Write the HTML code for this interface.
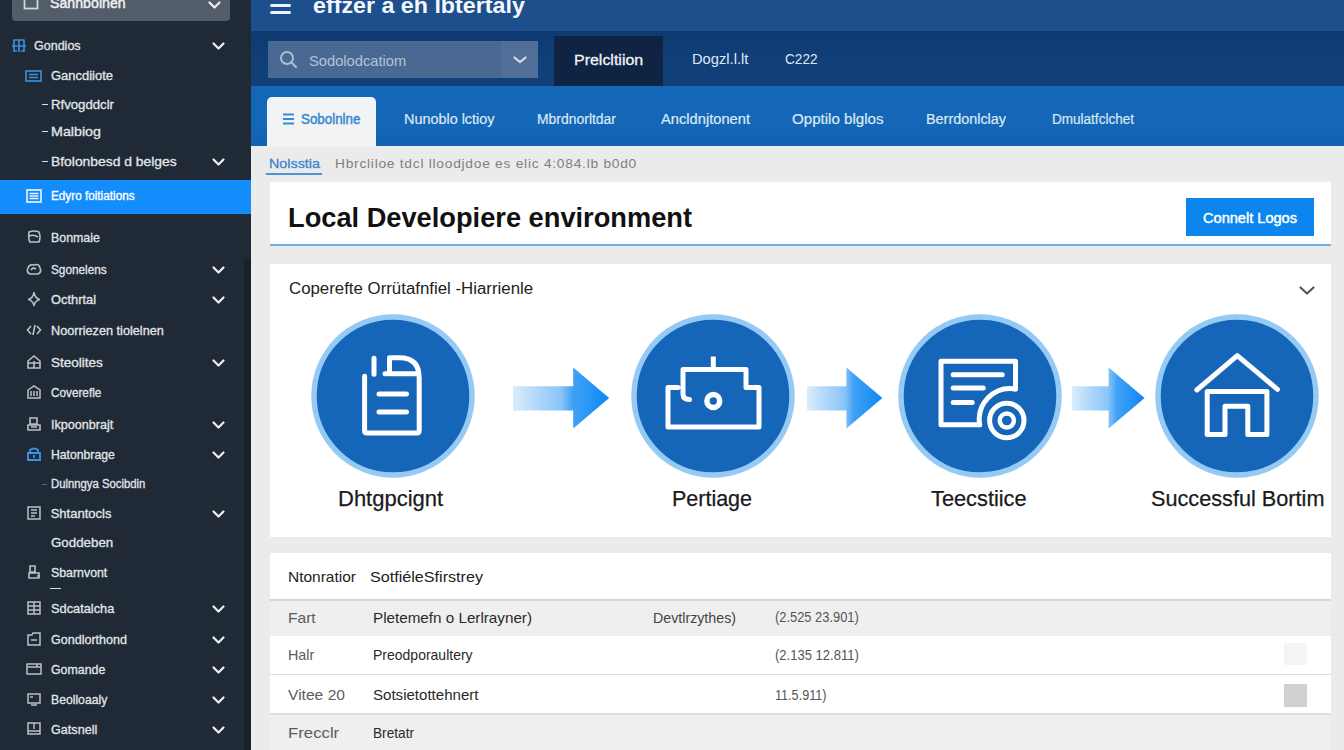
<!DOCTYPE html><html><head><meta charset="utf-8"><style>
*{margin:0;padding:0;box-sizing:border-box}
html,body{width:1344px;height:750px;overflow:hidden;background:#ebebeb;font-family:"Liberation Sans",sans-serif}
.a{position:absolute;white-space:nowrap}
.x{position:absolute;white-space:nowrap;line-height:1;transform-origin:0 0}
svg.a{overflow:visible}
#w{position:absolute;left:0;top:0;width:1344px;height:750px;overflow:hidden}
</style></head><body><div id="w">
<div class="a" style="left:0px;top:0px;width:251px;height:750px;background:#202a36"></div>
<div class="a" style="left:244px;top:258px;width:7px;height:492px;background:#19212c"></div>
<div class="a" style="left:12px;top:-8px;width:218px;height:29px;background:#535c69;border-radius:0 0 4px 4px"></div>
<svg class="a" style="left:23px;top:-3px" width="17" height="14" viewBox="0 0 17 14"><rect x="1.5" y="-3" width="13" height="14.5" fill="none" stroke="#cfd5dc" stroke-width="1.8"/></svg>
<svg class="a" style="left:208px;top:1.0px" width="13" height="9" viewBox="0 0 13 9"><path d="M1.5 1.5 L6.5 6.5 L11.5 1.5" fill="none" stroke="#eef1f4" stroke-width="2.2" stroke-linecap="round" stroke-linejoin="round"/></svg>
<svg class="a" style="left:11px;top:38px" width="16" height="15" viewBox="0 0 16 15"><path d="M3 2H13V8H3ZM1 8H15M8 2V14M3 8V13H6M13 8V13H10" fill="none" stroke="#3b8fe0" stroke-width="1.7" stroke-linejoin="round"/></svg>
<svg class="a" style="left:212px;top:42.0px" width="13" height="9" viewBox="0 0 13 9"><path d="M1.5 1.5 L6.5 6.5 L11.5 1.5" fill="none" stroke="#eef1f4" stroke-width="2.2" stroke-linecap="round" stroke-linejoin="round"/></svg>
<svg class="a" style="left:25px;top:70px" width="17" height="12" viewBox="0 0 17 12"><rect x="1" y="1" width="15" height="10" fill="none" stroke="#3b8fe0" stroke-width="1.6"/><path d="M4 4.5H13M4 7.5H13" stroke="#3b8fe0" stroke-width="1.5"/></svg>
<div class="a" style="left:42px;top:104px;width:6px;height:1.3px;background:#d9dee4"></div>
<div class="a" style="left:42px;top:131px;width:6px;height:1.3px;background:#d9dee4"></div>
<div class="a" style="left:42px;top:161px;width:6px;height:1.3px;background:#d9dee4"></div>
<svg class="a" style="left:212px;top:157.5px" width="13" height="9" viewBox="0 0 13 9"><path d="M1.5 1.5 L6.5 6.5 L11.5 1.5" fill="none" stroke="#eef1f4" stroke-width="2.2" stroke-linecap="round" stroke-linejoin="round"/></svg>
<div class="a" style="left:0px;top:180px;width:251px;height:34px;background:#138cfc"></div>
<svg class="a" style="left:26px;top:189px" width="16" height="14" viewBox="0 0 16 14"><rect x="1" y="1" width="14" height="12" fill="none" stroke="#e8f3ff" stroke-width="1.7"/><path d="M3.5 4.5H12.5M3.5 7H12.5M3.5 9.5H12.5" stroke="#e8f3ff" stroke-width="1.4"/></svg>
<svg class="a" style="left:26px;top:229px" width="16" height="16" viewBox="0 0 16 16"><path d="M3 3Q8 1 13 3Q15 8 13 13H4Q2 10 3 3ZM3 7Q8 5 12 8" fill="none" stroke="#b9c0c8" stroke-width="1.6"/></svg>
<svg class="a" style="left:26px;top:261px" width="16" height="16" viewBox="0 0 16 16"><path d="M4 13Q0 11 2 7Q3 3 8 4Q13 2 14 7Q16 11 12 13Z M5 9Q7 6 10 8" fill="none" stroke="#b9c0c8" stroke-width="1.6"/></svg>
<svg class="a" style="left:212px;top:265.5px" width="13" height="9" viewBox="0 0 13 9"><path d="M1.5 1.5 L6.5 6.5 L11.5 1.5" fill="none" stroke="#eef1f4" stroke-width="2.2" stroke-linecap="round" stroke-linejoin="round"/></svg>
<svg class="a" style="left:26px;top:291px" width="16" height="16" viewBox="0 0 16 16"><path d="M8 1.5Q9 7 13.5 8.5Q9 10 8 14.5Q7 10 2.5 8.5Q7 7 8 1.5Z" fill="none" stroke="#b9c0c8" stroke-width="1.5" stroke-linejoin="round"/></svg>
<svg class="a" style="left:212px;top:295.5px" width="13" height="9" viewBox="0 0 13 9"><path d="M1.5 1.5 L6.5 6.5 L11.5 1.5" fill="none" stroke="#eef1f4" stroke-width="2.2" stroke-linecap="round" stroke-linejoin="round"/></svg>
<svg class="a" style="left:26px;top:322px" width="16" height="16" viewBox="0 0 16 16"><path d="M5 4L1.5 8L5 12M11 4L14.5 8L11 12M9 3L7 13" fill="none" stroke="#b9c0c8" stroke-width="1.6"/></svg>
<svg class="a" style="left:26px;top:354px" width="16" height="16" viewBox="0 0 16 16"><path d="M2 7L8 2L14 7V14H2ZM2 9H14M8 7V14" fill="none" stroke="#b9c0c8" stroke-width="1.6"/></svg>
<svg class="a" style="left:212px;top:358.5px" width="13" height="9" viewBox="0 0 13 9"><path d="M1.5 1.5 L6.5 6.5 L11.5 1.5" fill="none" stroke="#eef1f4" stroke-width="2.2" stroke-linecap="round" stroke-linejoin="round"/></svg>
<svg class="a" style="left:26px;top:384px" width="16" height="16" viewBox="0 0 16 16"><path d="M2 6L8 2L14 6V14H2ZM5 7V12M8 7V12M11 7V12" fill="none" stroke="#b9c0c8" stroke-width="1.5"/></svg>
<svg class="a" style="left:26px;top:416px" width="16" height="16" viewBox="0 0 16 16"><path d="M4 2H11V8H4ZM2 14V9H14V14ZM5 11H11" fill="none" stroke="#b9c0c8" stroke-width="1.6"/></svg>
<svg class="a" style="left:212px;top:420.5px" width="13" height="9" viewBox="0 0 13 9"><path d="M1.5 1.5 L6.5 6.5 L11.5 1.5" fill="none" stroke="#eef1f4" stroke-width="2.2" stroke-linecap="round" stroke-linejoin="round"/></svg>
<svg class="a" style="left:26px;top:446px" width="16" height="16" viewBox="0 0 16 16"><path d="M4 7V4Q8 1 12 4V7M2 7H14V14H2ZM8 9V12" fill="none" stroke="#3b93e4" stroke-width="1.8"/></svg>
<svg class="a" style="left:212px;top:450.5px" width="13" height="9" viewBox="0 0 13 9"><path d="M1.5 1.5 L6.5 6.5 L11.5 1.5" fill="none" stroke="#eef1f4" stroke-width="2.2" stroke-linecap="round" stroke-linejoin="round"/></svg>
<svg class="a" style="left:26px;top:505px" width="16" height="16" viewBox="0 0 16 16"><path d="M2 2H14V14H2ZM5 5H11M5 8H11M5 11H9" fill="none" stroke="#b9c0c8" stroke-width="1.5"/></svg>
<svg class="a" style="left:212px;top:509.5px" width="13" height="9" viewBox="0 0 13 9"><path d="M1.5 1.5 L6.5 6.5 L11.5 1.5" fill="none" stroke="#eef1f4" stroke-width="2.2" stroke-linecap="round" stroke-linejoin="round"/></svg>
<svg class="a" style="left:26px;top:564px" width="16" height="16" viewBox="0 0 16 16"><path d="M4 2H9V8H4ZM3 14V9H13V14ZM11 12H14" fill="none" stroke="#b9c0c8" stroke-width="1.6"/></svg>
<div class="a" style="left:50px;top:587.5px;width:11px;height:1.5px;background:#d9dee4"></div>
<div class="a" style="left:42px;top:483.5px;width:5px;height:1.2px;background:#5d6670"></div>
<svg class="a" style="left:26px;top:600px" width="16" height="16" viewBox="0 0 16 16"><path d="M2 2H14V14H2ZM2 6H14M2 10H14M8 2V14" fill="none" stroke="#b9c0c8" stroke-width="1.5"/></svg>
<svg class="a" style="left:212px;top:604.5px" width="13" height="9" viewBox="0 0 13 9"><path d="M1.5 1.5 L6.5 6.5 L11.5 1.5" fill="none" stroke="#eef1f4" stroke-width="2.2" stroke-linecap="round" stroke-linejoin="round"/></svg>
<svg class="a" style="left:26px;top:631px" width="16" height="16" viewBox="0 0 16 16"><path d="M2 4H6L7 2H14V14H2ZM5 9H11" fill="none" stroke="#b9c0c8" stroke-width="1.5"/></svg>
<svg class="a" style="left:212px;top:635.5px" width="13" height="9" viewBox="0 0 13 9"><path d="M1.5 1.5 L6.5 6.5 L11.5 1.5" fill="none" stroke="#eef1f4" stroke-width="2.2" stroke-linecap="round" stroke-linejoin="round"/></svg>
<svg class="a" style="left:26px;top:661px" width="16" height="16" viewBox="0 0 16 16"><path d="M1 3H15V13H1ZM1 6H15M11 3V6" fill="none" stroke="#b9c0c8" stroke-width="1.5"/></svg>
<svg class="a" style="left:212px;top:665.5px" width="13" height="9" viewBox="0 0 13 9"><path d="M1.5 1.5 L6.5 6.5 L11.5 1.5" fill="none" stroke="#eef1f4" stroke-width="2.2" stroke-linecap="round" stroke-linejoin="round"/></svg>
<svg class="a" style="left:26px;top:691px" width="16" height="16" viewBox="0 0 16 16"><path d="M2 3H14V12H2ZM5 14H11M4 6H7" fill="none" stroke="#b9c0c8" stroke-width="1.5"/></svg>
<svg class="a" style="left:212px;top:695.5px" width="13" height="9" viewBox="0 0 13 9"><path d="M1.5 1.5 L6.5 6.5 L11.5 1.5" fill="none" stroke="#eef1f4" stroke-width="2.2" stroke-linecap="round" stroke-linejoin="round"/></svg>
<svg class="a" style="left:26px;top:721px" width="16" height="16" viewBox="0 0 16 16"><path d="M2 2H14V13H2ZM8 2V8M2 10H14" fill="none" stroke="#b9c0c8" stroke-width="1.5"/></svg>
<svg class="a" style="left:212px;top:725.5px" width="13" height="9" viewBox="0 0 13 9"><path d="M1.5 1.5 L6.5 6.5 L11.5 1.5" fill="none" stroke="#eef1f4" stroke-width="2.2" stroke-linecap="round" stroke-linejoin="round"/></svg>
<div class="a" style="left:251px;top:0px;width:1093px;height:31px;background:#1d4f8d"></div>
<div class="a" style="left:270px;top:4px;width:21px;height:3px;background:#e9f2fb;border-radius:1.5px"></div>
<div class="a" style="left:270px;top:11px;width:21px;height:3px;background:#e9f2fb;border-radius:1.5px"></div>
<div class="a" style="left:251px;top:31px;width:1093px;height:55px;background:linear-gradient(#0e3a71,#113f78 60%,#113f78)"></div>
<div class="a" style="left:268px;top:41px;width:233px;height:37px;background:#4a6992"></div>
<div class="a" style="left:501px;top:41px;width:37px;height:37px;background:#506e97"></div>
<svg class="a" style="left:278px;top:50px" width="22" height="20" viewBox="0 0 22 20"><circle cx="9" cy="8" r="6" fill="none" stroke="#aabdd3" stroke-width="2"/><path d="M13.5 12.5L18 17" stroke="#aabdd3" stroke-width="2.2" stroke-linecap="round"/></svg>
<svg class="a" style="left:513px;top:56px" width="14" height="8" viewBox="0 0 14 8"><path d="M1.5 1.5L7 6L12.5 1.5" fill="none" stroke="#d3deea" stroke-width="2.2" stroke-linecap="round"/></svg>
<div class="a" style="left:554px;top:36px;width:109px;height:50px;background:#0f2342"></div>
<div class="a" style="left:251px;top:86px;width:1093px;height:60px;background:linear-gradient(#1467b8,#1466b7 70%,#1262b1)"></div>
<div class="a" style="left:267px;top:96.5px;width:109px;height:50px;background:#f1f3f5;border-radius:5px 5px 0 0"></div>
<svg class="a" style="left:282px;top:113px" width="13" height="12" viewBox="0 0 13 12"><path d="M1 1.5H12M1 6H12M1 10.5H12" stroke="#3a8ad6" stroke-width="2"/></svg>
<div class="a" style="left:266px;top:173px;width:56px;height:2px;background:#4a96dc"></div>
<div class="a" style="left:270px;top:182px;width:1061px;height:64px;background:#fff;border-bottom:2px solid #6eb0e6"></div>
<div class="a" style="left:1186px;top:198px;width:128px;height:38px;background:#0a86ee"></div>
<div class="a" style="left:270px;top:264px;width:1061px;height:272.5px;background:#fff"></div>
<svg class="a" style="left:1299px;top:285.5px" width="16" height="10" viewBox="0 0 16 10"><path d="M1.5 1.5L8 7.5L14.5 1.5" fill="none" stroke="#555" stroke-width="2.2" stroke-linecap="round" stroke-linejoin="round"/></svg>
<svg class="a" style="left:309.5px;top:313.3px" width="166" height="166" viewBox="0 0 166 166"><circle cx="83" cy="83" r="79" fill="#1565b8" stroke="#95caf4" stroke-width="5.5"/><g fill="none" stroke="#fff" stroke-width="5" stroke-linecap="round" stroke-linejoin="round" transform="translate(-309.5 -313.3)"><path d="M373.5 358.5V374.5M389 373V358H399Q418.7 358 418.7 378V431Q418.7 433.3 416.4 433.3H366.4Q364.1 433.3 364.1 431V376.5M384.5 374H416M378.5 394.3H406M378.5 412.3H406"/></g></svg>
<svg class="a" style="left:630px;top:313px" width="166" height="166" viewBox="0 0 166 166"><circle cx="83" cy="83" r="79" fill="#1565b8" stroke="#95caf4" stroke-width="5.5"/><g fill="none" stroke="#fff" stroke-width="5" stroke-linecap="round" stroke-linejoin="round" transform="translate(-630 -313)"><path d="M713.3 356.5V369" stroke-linecap="butt"/><path d="M683 369.5H746V387.5H759V427H668V387.5H678M683 369.5V394Q683 399.5 689.5 399.5"/><circle cx="713.3" cy="401" r="6.4" stroke-width="5.5"/></g></svg>
<svg class="a" style="left:897.3px;top:313px" width="166" height="166" viewBox="0 0 166 166"><circle cx="83" cy="83" r="79" fill="#1565b8" stroke="#95caf4" stroke-width="5.5"/><g fill="none" stroke="#fff" stroke-width="5" stroke-linecap="round" stroke-linejoin="round" transform="translate(-897.3 -313)"><path d="M1015.8 389V361.3H941.3V424.7H980"/><path d="M1015.8 389A31 31 0 0 0 980 424.7"/><path d="M953.5 374.8H1002.5M953.5 388H983.5M953.5 402.5H972.5"/><circle cx="1007.1" cy="420.5" r="17.2"/><circle cx="1007.1" cy="420.5" r="7.1" stroke-width="4.5"/></g></svg>
<svg class="a" style="left:1154.2px;top:313px" width="166" height="166" viewBox="0 0 166 166"><circle cx="83" cy="83" r="79" fill="#1565b8" stroke="#95caf4" stroke-width="5.5"/><g fill="none" stroke="#fff" stroke-width="5" stroke-linecap="round" stroke-linejoin="round" transform="translate(-1154.2 -313)"><path d="M1197 390L1237.5 355.6L1277.7 389.4M1207.4 391.4H1267.1V434.5H1248V406.2H1225.2V434.5H1207.4Z"/></g></svg>
<svg class="a" style="left:513.4px;top:367px" width="96.20000000000005" height="62" viewBox="0 0 96.20000000000005 62"><defs><linearGradient id="g513.4" gradientUnits="userSpaceOnUse" x1="0" x2="96.20000000000005" y1="0" y2="0"><stop offset="0" stop-color="#1a8cf0" stop-opacity="0.16"/><stop offset="0.5" stop-color="#2a95f2" stop-opacity="0.55"/><stop offset="0.62" stop-color="#1e90f4" stop-opacity="0.85"/><stop offset="1" stop-color="#0c88f4"/></linearGradient></defs><path d="M0 19.2H60.200000000000045 V0.5 L96.20000000000005 31 L60.200000000000045 61.5 V43.5 H0Z" fill="url(#g513.4)"/></svg>
<svg class="a" style="left:807px;top:367px" width="75.39999999999998" height="62" viewBox="0 0 75.39999999999998 62"><defs><linearGradient id="g807" gradientUnits="userSpaceOnUse" x1="0" x2="75.39999999999998" y1="0" y2="0"><stop offset="0" stop-color="#1a8cf0" stop-opacity="0.16"/><stop offset="0.5" stop-color="#2a95f2" stop-opacity="0.55"/><stop offset="0.62" stop-color="#1e90f4" stop-opacity="0.85"/><stop offset="1" stop-color="#0c88f4"/></linearGradient></defs><path d="M0 19.2H39.39999999999998 V0.5 L75.39999999999998 31 L39.39999999999998 61.5 V43.5 H0Z" fill="url(#g807)"/></svg>
<svg class="a" style="left:1072px;top:367px" width="72.59999999999991" height="62" viewBox="0 0 72.59999999999991 62"><defs><linearGradient id="g1072" gradientUnits="userSpaceOnUse" x1="0" x2="72.59999999999991" y1="0" y2="0"><stop offset="0" stop-color="#1a8cf0" stop-opacity="0.16"/><stop offset="0.5" stop-color="#2a95f2" stop-opacity="0.55"/><stop offset="0.62" stop-color="#1e90f4" stop-opacity="0.85"/><stop offset="1" stop-color="#0c88f4"/></linearGradient></defs><path d="M0 19.2H36.59999999999991 V0.5 L72.59999999999991 31 L36.59999999999991 61.5 V43.5 H0Z" fill="url(#g1072)"/></svg>
<div class="a" style="left:270px;top:553px;width:1061px;height:197px;background:#fff"></div>
<div class="a" style="left:270px;top:599px;width:1061px;height:1.5px;background:#d6d6d6"></div>
<div class="a" style="left:270px;top:600.5px;width:1061px;height:35.5px;background:#efefef"></div>
<div class="a" style="left:270px;top:674px;width:1061px;height:1.2px;background:#dddddd"></div>
<div class="a" style="left:270px;top:713px;width:1061px;height:1.5px;background:#dddddd"></div>
<div class="a" style="left:270px;top:714.5px;width:1061px;height:36px;background:#efefef"></div>
<div class="a" style="left:1284px;top:643px;width:23px;height:22px;background:#f4f4f4"></div>
<div class="a" style="left:1284px;top:683.5px;width:23px;height:23px;background:#d0d0d0"></div>
<div class="x" id="t0" style="left:50px;top:-3.6px;font-size:14px;font-weight:400;color:#eef1f4;transform:scaleX(1.0127);-webkit-text-stroke:0.45px #eef1f4;">Sannbolnen</div>
<div class="x" id="t1" style="left:34.4px;top:39.0px;font-size:13px;font-weight:400;color:#e2e6ea;transform:scaleX(0.9624);-webkit-text-stroke:0.3px #e2e6ea;">Gondios</div>
<div class="x" id="t2" style="left:51px;top:70.0px;font-size:12px;font-weight:400;color:#e2e6ea;transform:scaleX(1.0806);-webkit-text-stroke:0.3px #e2e6ea;">Gancdiiote</div>
<div class="x" id="t3" style="left:51px;top:97.5px;font-size:13px;font-weight:400;color:#e2e6ea;transform:scaleX(1.0138);-webkit-text-stroke:0.3px #e2e6ea;">Rfvogddclr</div>
<div class="x" id="t4" style="left:51px;top:124.5px;font-size:13px;font-weight:400;color:#e2e6ea;transform:scaleX(1.0981);-webkit-text-stroke:0.3px #e2e6ea;">Malbiog</div>
<div class="x" id="t5" style="left:51px;top:154.5px;font-size:13px;font-weight:400;color:#e2e6ea;transform:scaleX(1.0661);-webkit-text-stroke:0.3px #e2e6ea;">Bfolonbesd d belges</div>
<div class="x" id="t6" style="left:50.7px;top:190.0px;font-size:12px;font-weight:400;color:#ffffff;transform:scaleX(0.9790);-webkit-text-stroke:0.35px #fff;">Edyro foitiations</div>
<div class="x" id="t7" style="left:50.7px;top:230.5px;font-size:13px;font-weight:400;color:#e2e6ea;transform:scaleX(0.9530);-webkit-text-stroke:0.3px #e2e6ea;">Bonmaie</div>
<div class="x" id="t8" style="left:50.7px;top:262.5px;font-size:13px;font-weight:400;color:#e2e6ea;transform:scaleX(0.9064);-webkit-text-stroke:0.3px #e2e6ea;">Sgonelens</div>
<div class="x" id="t9" style="left:50.7px;top:292.5px;font-size:13px;font-weight:400;color:#e2e6ea;transform:scaleX(0.9909);-webkit-text-stroke:0.3px #e2e6ea;">Octhrtal</div>
<div class="x" id="t10" style="left:50.7px;top:323.5px;font-size:13px;font-weight:400;color:#e2e6ea;transform:scaleX(0.9756);-webkit-text-stroke:0.3px #e2e6ea;">Noorriezen tiolelnen</div>
<div class="x" id="t11" style="left:50.7px;top:355.5px;font-size:13px;font-weight:400;color:#e2e6ea;transform:scaleX(1.0406);-webkit-text-stroke:0.3px #e2e6ea;">Steolites</div>
<div class="x" id="t12" style="left:50.7px;top:385.5px;font-size:13px;font-weight:400;color:#e2e6ea;transform:scaleX(0.9040);-webkit-text-stroke:0.3px #e2e6ea;">Coverefle</div>
<div class="x" id="t13" style="left:50.7px;top:417.5px;font-size:13px;font-weight:400;color:#e2e6ea;transform:scaleX(0.9685);-webkit-text-stroke:0.3px #e2e6ea;">Ikpoonbrajt</div>
<div class="x" id="t14" style="left:50.7px;top:447.5px;font-size:13px;font-weight:400;color:#e2e6ea;transform:scaleX(0.9389);-webkit-text-stroke:0.3px #e2e6ea;">Hatonbrage</div>
<div class="x" id="t15" style="left:50.7px;top:477.5px;font-size:12px;font-weight:400;color:#e2e6ea;transform:scaleX(0.9423);-webkit-text-stroke:0.3px #e2e6ea;">Dulnngya Socibdin</div>
<div class="x" id="t16" style="left:50.7px;top:506.5px;font-size:13px;font-weight:400;color:#e2e6ea;-webkit-text-stroke:0.3px #e2e6ea;">Shtantocls</div>
<div class="x" id="t17" style="left:50.7px;top:535.5px;font-size:13px;font-weight:400;color:#e2e6ea;transform:scaleX(1.0258);-webkit-text-stroke:0.3px #e2e6ea;">Goddeben</div>
<div class="x" id="t18" style="left:50.7px;top:565.5px;font-size:13px;font-weight:400;color:#e2e6ea;transform:scaleX(0.9500);-webkit-text-stroke:0.3px #e2e6ea;">Sbarnvont</div>
<div class="x" id="t19" style="left:50.7px;top:601.5px;font-size:13px;font-weight:400;color:#e2e6ea;transform:scaleX(0.9840);-webkit-text-stroke:0.3px #e2e6ea;">Sdcatalcha</div>
<div class="x" id="t20" style="left:50.7px;top:632.5px;font-size:13px;font-weight:400;color:#e2e6ea;transform:scaleX(0.9647);-webkit-text-stroke:0.3px #e2e6ea;">Gondlorthond</div>
<div class="x" id="t21" style="left:50.7px;top:662.5px;font-size:13px;font-weight:400;color:#e2e6ea;transform:scaleX(0.9511);-webkit-text-stroke:0.3px #e2e6ea;">Gomande</div>
<div class="x" id="t22" style="left:50.7px;top:692.5px;font-size:13px;font-weight:400;color:#e2e6ea;transform:scaleX(0.9383);-webkit-text-stroke:0.3px #e2e6ea;">Beolloaaly</div>
<div class="x" id="t23" style="left:50.7px;top:722.5px;font-size:13px;font-weight:400;color:#e2e6ea;transform:scaleX(0.9706);-webkit-text-stroke:0.3px #e2e6ea;">Gatsnell</div>
<div class="x" id="t24" style="left:312.7px;top:-4.7px;font-size:22px;font-weight:700;color:#f4f8fc;transform:scaleX(1.0563);">effzer a eh lbtertaly</div>
<div class="x" id="t25" style="left:308.8px;top:52.5px;font-size:15px;font-weight:400;color:#b3c3d7;transform:scaleX(0.9795);">Sodolodcatiom</div>
<div class="x" id="t26" style="left:573.8px;top:51.5px;font-size:15px;font-weight:400;color:#f2f5f9;transform:scaleX(1.0641);-webkit-text-stroke:0.3px #f2f5f9;">Prelcltiion</div>
<div class="x" id="t27" style="left:691.6px;top:52.0px;font-size:14px;font-weight:400;color:#dfe8f2;transform:scaleX(1.0505);">Dogzl.l.lt</div>
<div class="x" id="t28" style="left:785px;top:52.0px;font-size:14px;font-weight:400;color:#dfe8f2;transform:scaleX(0.9711);">C222</div>
<div class="x" id="t29" style="left:300.8px;top:112.0px;font-size:14px;font-weight:400;color:#3987cf;transform:scaleX(0.9537);-webkit-text-stroke:0.45px #3987cf;">Sobolnlne</div>
<div class="x" id="t30" style="left:404px;top:112.0px;font-size:14px;font-weight:400;color:#dce8f5;transform:scaleX(1.0291);-webkit-text-stroke:0.2px #dce8f5;">Nunoblo lctioy</div>
<div class="x" id="t31" style="left:537px;top:112.0px;font-size:14px;font-weight:400;color:#dce8f5;transform:scaleX(0.9953);-webkit-text-stroke:0.2px #dce8f5;">Mbrdnorltdar</div>
<div class="x" id="t32" style="left:661px;top:112.0px;font-size:14px;font-weight:400;color:#dce8f5;transform:scaleX(1.0490);-webkit-text-stroke:0.2px #dce8f5;">Ancldnjtonent</div>
<div class="x" id="t33" style="left:792px;top:112.0px;font-size:14px;font-weight:400;color:#dce8f5;transform:scaleX(1.0787);-webkit-text-stroke:0.2px #dce8f5;">Opptilo blglos</div>
<div class="x" id="t34" style="left:926px;top:112.0px;font-size:14px;font-weight:400;color:#dce8f5;transform:scaleX(1.0279);-webkit-text-stroke:0.2px #dce8f5;">Berrdonlclay</div>
<div class="x" id="t35" style="left:1052px;top:112.0px;font-size:14px;font-weight:400;color:#dce8f5;transform:scaleX(0.9668);-webkit-text-stroke:0.2px #dce8f5;">Dmulatfclchet</div>
<div class="x" id="t36" style="left:269px;top:156.5px;font-size:13px;font-weight:400;color:#3a86cf;transform:scaleX(1.1027);-webkit-text-stroke:0.3px #3a86cf;">Nolsstia</div>
<div class="x" id="t37" style="left:335px;top:156.5px;font-size:13px;font-weight:400;color:#808080;transform:scaleX(1.0591);letter-spacing:0.7px;">Hbrcliloe tdcl  lloodjdoe es elic 4:084.lb  b0d0</div>
<div class="x" id="t38" style="left:288px;top:204.0px;font-size:28px;font-weight:700;color:#111111;transform:scaleX(0.9724);">Local Developiere environment</div>
<div class="x" id="t39" style="left:1203px;top:210.6px;font-size:14px;font-weight:400;color:#ffffff;transform:scaleX(1.0410);-webkit-text-stroke:0.45px #fff;">Connelt Logos</div>
<div class="x" id="t40" style="left:288.9px;top:281.3px;font-size:16px;font-weight:400;color:#222222;transform:scaleX(1.0517);">Coperefte Orr&uuml;tafnfiel -Hiarrienle</div>
<div class="x" id="t41" style="left:338px;top:488.0px;font-size:22px;font-weight:400;color:#1a1a1a;-webkit-text-stroke:0.25px #1a1a1a;">Dhtgpcignt</div>
<div class="x" id="t42" style="left:672px;top:488.0px;font-size:22px;font-weight:400;color:#1a1a1a;transform:scaleX(0.9762);-webkit-text-stroke:0.25px #1a1a1a;">Pertiage</div>
<div class="x" id="t43" style="left:931.4px;top:488.0px;font-size:22px;font-weight:400;color:#1a1a1a;transform:scaleX(0.9897);-webkit-text-stroke:0.25px #1a1a1a;">Teecstiice</div>
<div class="x" id="t44" style="left:1151px;top:488.0px;font-size:22px;font-weight:400;color:#1a1a1a;transform:scaleX(0.9854);-webkit-text-stroke:0.25px #1a1a1a;">Successful Bortim</div>
<div class="x" id="t45" style="left:288px;top:568.5px;font-size:15px;font-weight:400;color:#222;transform:scaleX(1.0325);">Ntonratior</div>
<div class="x" id="t46" style="left:370px;top:568.5px;font-size:15px;font-weight:400;color:#222;transform:scaleX(1.0757);">Sotfi&eacute;leSfirstrey</div>
<div class="x" id="t47" style="left:288px;top:609.9px;font-size:15px;font-weight:400;color:#5c5c5c;transform:scaleX(1.0385);">Fart</div>
<div class="x" id="t48" style="left:288px;top:647.1px;font-size:15px;font-weight:400;color:#5c5c5c;transform:scaleX(0.9558);">Halr</div>
<div class="x" id="t49" style="left:288px;top:687.3px;font-size:15px;font-weight:400;color:#5c5c5c;transform:scaleX(1.0405);">Vitee 20</div>
<div class="x" id="t50" style="left:288px;top:724.8px;font-size:15px;font-weight:400;color:#5c5c5c;transform:scaleX(1.1172);">Frecclr</div>
<div class="x" id="t51" style="left:373px;top:609.9px;font-size:15px;font-weight:400;color:#2a2a2a;transform:scaleX(1.0144);">Pletemefn o Lerlrayner)</div>
<div class="x" id="t52" style="left:373px;top:647.1px;font-size:15px;font-weight:400;color:#2a2a2a;transform:scaleX(0.9332);">Preodporaultery</div>
<div class="x" id="t53" style="left:373px;top:687.3px;font-size:15px;font-weight:400;color:#2a2a2a;transform:scaleX(1.0040);">Sotsietottehnert</div>
<div class="x" id="t54" style="left:373px;top:724.8px;font-size:15px;font-weight:400;color:#2a2a2a;transform:scaleX(0.9108);">Bretatr</div>
<div class="x" id="t55" style="left:653px;top:609.9px;font-size:15px;font-weight:400;color:#444;transform:scaleX(0.9482);">Devtlrzythes)</div>
<div class="x" id="t56" style="left:775px;top:610.4px;font-size:14px;font-weight:400;color:#555;transform:scaleX(0.9201);">(2.525 23.901)</div>
<div class="x" id="t57" style="left:775px;top:647.6px;font-size:14px;font-weight:400;color:#555;transform:scaleX(0.9308);">(2.135 12.811)</div>
<div class="x" id="t58" style="left:775px;top:687.8px;font-size:14px;font-weight:400;color:#555;transform:scaleX(0.9020);">11.5.911)</div>
</div></body></html>
